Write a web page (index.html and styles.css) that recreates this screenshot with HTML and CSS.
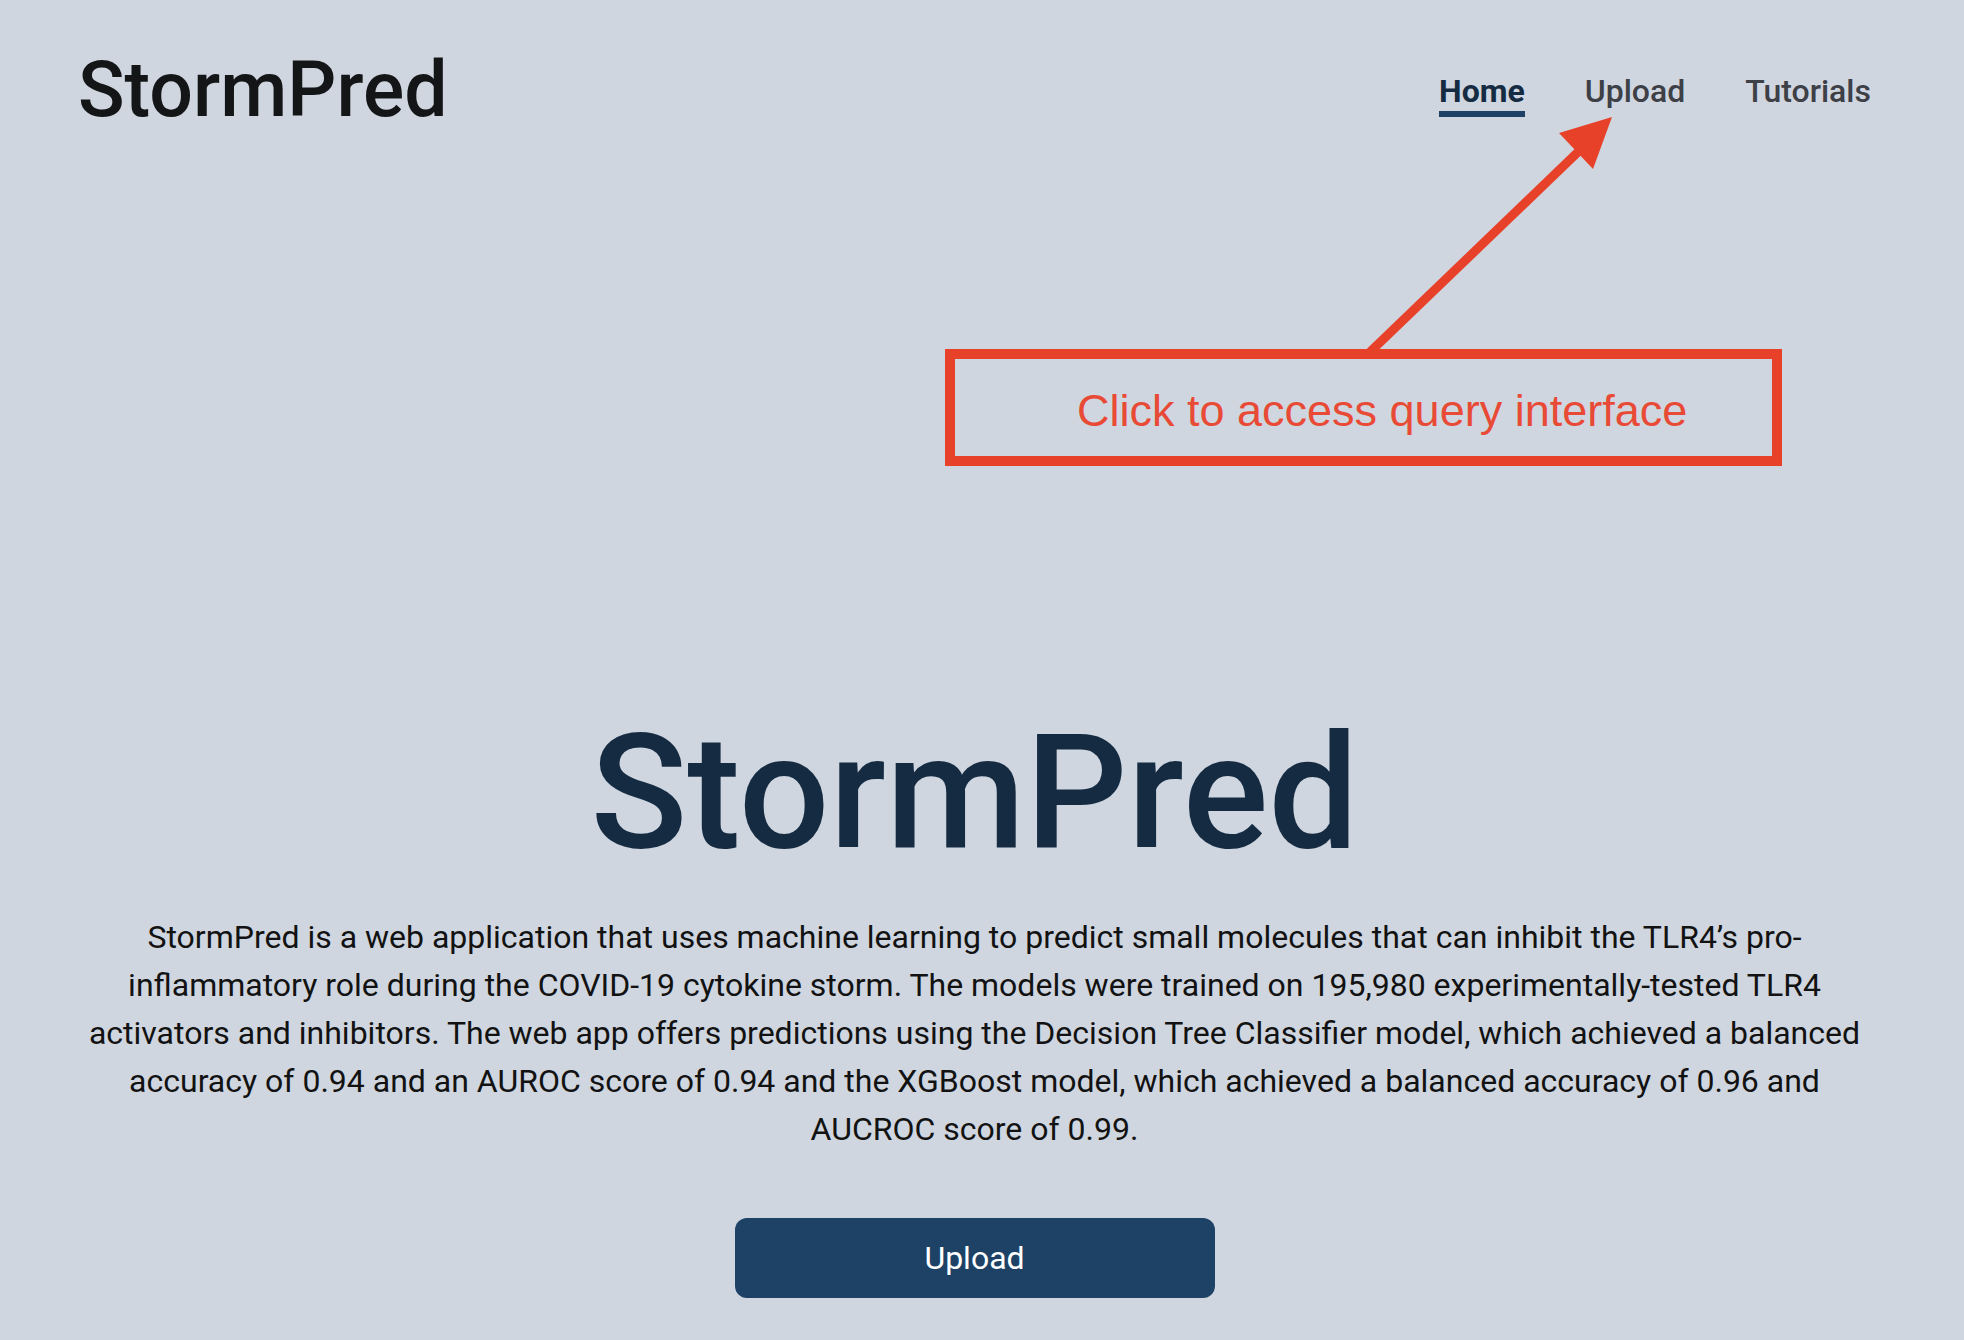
FILE: index.html
```html
<!DOCTYPE html>
<html lang="en">
<head>
<meta charset="utf-8">
<title>StormPred</title>
<link rel="stylesheet" href="styles.css">
</head>
<body>
<div class="page">
  <header class="topbar">
    <div class="logo">StormPred</div>
    <nav class="nav">
      <a class="nav-link active" href="#">Home</a>
      <a class="nav-link" href="#">Upload</a>
      <a class="nav-link" href="#">Tutorials</a>
    </nav>
  </header>

  <main class="hero">
    <h1 class="hero-title">StormPred</h1>
    <p class="hero-text">StormPred is a web application that uses machine learning to predict small molecules that can inhibit the TLR4’s pro-inflammatory role during the COVID-19 cytokine storm. The models were trained on 195,980 experimentally-tested TLR4 activators and inhibitors. The web app offers predictions using the Decision Tree Classifier model, which achieved a balanced accuracy of 0.94 and an AUROC score of 0.94 and the XGBoost model, which achieved a balanced accuracy of 0.96 and AUCROC score of 0.99.</p>
    <button class="upload-btn" type="button">Upload</button>
  </main>

  <svg class="annot-arrow" width="270" height="250" viewBox="0 0 270 250" aria-hidden="true">
    <line x1="20" y1="242" x2="228" y2="42" stroke="#e8412a" stroke-width="9"/>
    <polygon points="262,7 209,23 243,59" fill="#e8412a"/>
  </svg>
  <div class="annot-box"><span class="annot-text">Click to access query interface</span></div>
</div>
</body>
</html>
```

FILE: styles.css
```css
html, body {
  margin: 0;
  padding: 0;
  background: #cfd6e0;
}

body {
  font-family: Roboto, "Noto Sans", sans-serif;
  color: #151515;
}

.page {
  position: relative;
  width: 1949px;
  min-height: 1340px;
  box-sizing: border-box;
}

.topbar {
  display: flex;
  justify-content: space-between;
  align-items: flex-start;
  padding: 52px 78px 0 78px;
}

.logo {
  font-size: 77px;
  line-height: 1;
  font-weight: 500;
  color: #141517;
}

.nav {
  display: flex;
  gap: 60px;
  margin-top: 23px;
}

.nav-link {
  font-size: 32px;
  line-height: 1;
  font-weight: 500;
  color: #3d4046;
  text-decoration: none;
  padding-bottom: 4px;
  border-bottom: 6px solid transparent;
}

.nav-link.active {
  font-weight: 700;
  color: #152b42;
  border-bottom-color: #1d4266;
}

.hero {
  display: flex;
  flex-direction: column;
  align-items: center;
  padding: 584px 70px 0 70px;
}

.hero-title {
  margin: 0;
  font-size: 160px;
  line-height: 1;
  font-weight: 500;
  color: #152b42;
}

.hero-text {
  margin: 40px 0 0 0;
  max-width: 1800px;
  font-size: 32px;
  line-height: 48px;
  text-align: center;
  color: #121212;
}

.upload-btn {
  margin-top: 65px;
  width: 480px;
  height: 80px;
  border: none;
  border-radius: 12px;
  background: #1d4266;
  color: #ffffff;
  font-family: Roboto, "Noto Sans", sans-serif;
  font-size: 32px;
  font-weight: 400;
}

.annot-arrow {
  position: absolute;
  left: 1350px;
  top: 110px;
}

.annot-box {
  position: absolute;
  left: 945px;
  top: 349px;
  width: 837px;
  height: 117px;
  box-sizing: border-box;
  border: 10px solid #e8412a;
  display: flex;
  align-items: center;
  padding: 5px 0 0 122px;
}

.annot-text {
  font-family: "Liberation Sans", Arial, sans-serif;
  font-size: 45px;
  color: #e84a36;
  line-height: 1;
}
```
